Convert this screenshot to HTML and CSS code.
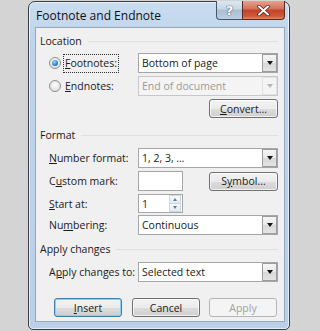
FILE: index.html
```html
<!DOCTYPE html>
<html>
<head>
<meta charset="utf-8">
<link rel="stylesheet" href="styles.css">
</head>
<body>
<div class="window">
  <div class="titlebar">
    <span class="title">Footnote and Endnote</span>
  </div>
  <div class="caption-btns">
    <div class="cbtn help">?</div>
    <div class="cbtn close"><svg width="13" height="11" viewBox="0 0 13 11"><path d="M2 1.5 L11 9.5 M11 1.5 L2 9.5" stroke="#5a1a10" stroke-width="3.4" stroke-linecap="round"/><path d="M2 1.5 L11 9.5 M11 1.5 L2 9.5" stroke="#ffffff" stroke-width="2" stroke-linecap="round"/></svg></div>
  </div>
  <div class="panel">
    <div class="group-head h-loc"><span>Location</span><i class="rule"></i></div>

    <div class="row r-foot">
      <div class="lab radio-lab"><span class="radio on"></span><span class="focus"><u>F</u>ootnotes:</span></div>
      <div class="select"><span class="val">Bottom of page</span><span class="drop"><i class="tri"></i></span></div>
    </div>
    <div class="row r-end">
      <div class="lab radio-lab"><span class="radio"></span><span class="plain"><u>E</u>ndnotes:</span></div>
      <div class="select disabled"><span class="val">End of document</span><span class="drop"><i class="tri"></i></span></div>
    </div>
    <div class="row r-conv">
      <div class="btn"><u>C</u>onvert...</div>
    </div>

    <div class="group-head h-fmt"><span>Format</span><i class="rule"></i></div>

    <div class="row r-num">
      <div class="lab"><u>N</u>umber format:</div>
      <div class="select"><span class="val">1, 2, 3, …</span><span class="drop"><i class="tri"></i></span></div>
    </div>
    <div class="row r-cust">
      <div class="lab">C<u>u</u>stom mark:</div>
      <div class="textbox"></div>
      <div class="btn">S<u>y</u>mbol...</div>
    </div>
    <div class="row r-start">
      <div class="lab"><u>S</u>tart at:</div>
      <div class="spin"><span class="val">1</span><span class="arrows"><span class="sbtn"><i class="up"></i></span><span class="sbtn"><i class="down"></i></span></span></div>
    </div>
    <div class="row r-numb">
      <div class="lab">Nu<u>m</u>bering:</div>
      <div class="select"><span class="val">Continuous</span><span class="drop"><i class="tri"></i></span></div>
    </div>

    <div class="group-head h-apply"><span>Apply changes</span><i class="rule"></i></div>

    <div class="row r-applyto">
      <div class="lab">A<u>p</u>ply changes to:</div>
      <div class="select"><span class="val">Selected text</span><span class="drop"><i class="tri"></i></span></div>
    </div>

    <div class="row r-btns">
      <div class="btn default"><u>I</u>nsert</div>
      <div class="btn">Cancel</div>
      <div class="btn disabled">Apply</div>
    </div>
  </div>
</div>
</body>
</html>
```
FILE: styles.css
```css
html, body {
  margin: 0;
  padding: 0;
}
body {
  background: #d4d4d4;
  width: 320px;
  height: 331px;
  overflow: hidden;
  font-family: "Open Sans", "Noto Sans", sans-serif;
  font-size: 10.5px;
  color: #1a1a1a;
}
u { text-decoration: underline; text-underline-offset: 1px; }

.window {
  position: relative;
  box-sizing: border-box;
  margin: 1px 0 0 28px;
  width: 262px;
  height: 329px;
  border: 1px solid #3b3f45;
  border-radius: 7px 7px 5px 5px;
  background: linear-gradient(to bottom, #c9dcf0 0px, #bfd4eb 40px, #bad0e9 100%);
  padding: 0 4px 7px 6px;
  display: flex;
  flex-direction: column;
  box-shadow: inset 0 0 0 1px rgba(255,255,255,0.6);
}
.titlebar {
  height: 25px;
  display: flex;
  align-items: center;
  flex: none;
}
.title {
  font-size: 12px;
  color: #101010;
  margin-left: 1px;
  margin-top: 1px;
}
.caption-btns {
  position: absolute;
  top: -1px;
  right: 4px;
  display: flex;
}
.cbtn {
  box-sizing: border-box;
  height: 19px;
  border: 1px solid #4a5566;
  border-top: none;
  display: flex;
  align-items: center;
  justify-content: center;
}
.help {
  width: 26px;
  border-radius: 0 0 0 4px;
  border-right: none;
  background: linear-gradient(to bottom, #dde7f2 0%, #c8d6e6 45%, #a9bdd3 50%, #bcd0e4 100%);
  color: #fff;
  font-family: "DejaVu Sans", sans-serif;
  font-size: 13px;
  font-weight: bold;
  text-shadow: 0 0 1px #35455a, 0 0 1px #35455a;
}
.close {
  width: 43px;
  border-radius: 0 0 4px 0;
  background: linear-gradient(to bottom, #e8a08e 0%, #d3705a 45%, #c3412a 50%, #cf5a3a 85%, #e08a60 100%);
  border-color: #5b2a22;
}

.panel {
  flex: 1;
  box-sizing: border-box;
  border: 1px solid #93a8bf;
  background: #f0f0f0;
  display: flex;
  flex-direction: column;
  padding: 0 6px 0 4px;
}

.group-head {
  height: 14px;
  display: flex;
  align-items: center;
  color: #1a1a1a;
}
.group-head .rule {
  flex: 1;
  height: 1px;
  background: #dcdfe3;
  margin-left: 6px;
}
.h-loc { margin-top: 6px; }
.h-fmt { margin-top: 10px; }
.h-apply { margin-top: 7px; }

.row {
  display: flex;
  align-items: center;
  flex: none;
}
.lab {
  width: 90px;
  padding-left: 9px;
  box-sizing: border-box;
  flex: none;
  white-space: nowrap;
}
.radio-lab {
  display: flex;
  align-items: center;
  padding-left: 9px;
}
.radio {
  width: 12px;
  height: 12px;
  box-sizing: border-box;
  border-radius: 50%;
  border: 1px solid #8f8f8f;
  background: radial-gradient(circle at 50% 40%, #ffffff 0%, #e6e6e6 60%, #d0d0d0 100%);
  margin-right: 3px;
  flex: none;
  position: relative;
}
.radio.on::after {
  content: "";
  position: absolute;
  left: 2px;
  top: 2px;
  width: 6px;
  height: 6px;
  border-radius: 50%;
  background: radial-gradient(circle at 40% 35%, #9fd6ff 0%, #2a7fd0 60%, #1a4f90 100%);
}
.focus {
  outline: 1px dotted #333;
  outline-offset: 0;
  padding: 2px 1px 3px 1px;
  line-height: 12px;
}
.plain { padding-left: 1px; }

.r-foot { margin-top: 5px; height: 20px; }
.r-end { margin-top: 3px; height: 20px; }
.r-conv { margin-top: 3px; height: 19px; justify-content: flex-end; }
.r-num { margin-top: 6px; height: 20px; }
.r-cust { margin-top: 3px; height: 20px; }
.r-start { margin-top: 3px; height: 19px; }
.r-numb { margin-top: 2px; height: 20px; }
.r-applyto { margin-top: 6px; height: 20px; }
.r-btns { margin-top: 16px; height: 19px; padding-left: 14px; gap: 10px; }
.r-btns .btn { width: 68px; }
.r-btns .btn.disabled { margin-left: -1px; }

.select {
  box-sizing: border-box;
  width: 140px;
  height: 20px;
  border: 1px solid #a4a6aa;
  background: #fff;
  margin-left: 8px;
  display: flex;
  align-items: center;
  position: relative;
}
.select .val {
  flex: 1;
  padding-left: 3px;
  white-space: nowrap;
}
.select .drop {
  box-sizing: border-box;
  width: 15px;
  height: 18px;
  border: 1px solid #9c9c9c;
  background: linear-gradient(to bottom, #f6f6f6 0%, #e8e8e8 50%, #d8d8d8 51%, #e4e4e4 100%);
  display: flex;
  align-items: center;
  justify-content: center;
}
.tri {
  width: 0;
  height: 0;
  border-left: 3.5px solid transparent;
  border-right: 3.5px solid transparent;
  border-top: 4px solid #111;
}
.select.disabled {
  background: #f4f4f4;
  border-color: #c8c8c8;
  color: #9a9a9a;
}
.select.disabled .drop {
  background: #f4f4f4;
  border-color: #e0e0e0;
}
.select.disabled .tri { border-top-color: #b5b5b5; }

.textbox {
  box-sizing: border-box;
  width: 45px;
  height: 20px;
  border: 1px solid #a4a6aa;
  background: #fff;
  margin-left: 8px;
}
.r-cust .btn { margin-left: auto; }

.spin {
  box-sizing: border-box;
  width: 45px;
  height: 19px;
  border: 1px solid #a4a6aa;
  background: #fff;
  margin-left: 8px;
  display: flex;
  align-items: center;
}
.spin .val { flex: 1; padding-left: 3px; }
.spin .arrows {
  width: 12px;
  height: 17px;
  display: flex;
  flex-direction: column;
  margin-right: 1px;
}
.sbtn {
  flex: 1;
  box-sizing: border-box;
  border: 1px solid #cfd6de;
  background: linear-gradient(to bottom, #f8f9fa, #e6eaee);
  display: flex;
  align-items: center;
  justify-content: center;
}
.sbtn + .sbtn { border-top: none; }
.up, .down {
  width: 0; height: 0;
  border-left: 2.5px solid transparent;
  border-right: 2.5px solid transparent;
}
.up { border-bottom: 3px solid #5a7ea8; }
.down { border-top: 3px solid #5a7ea8; }

.btn {
  box-sizing: border-box;
  width: 69px;
  height: 19px;
  border: 1px solid #707070;
  border-radius: 3px;
  background: linear-gradient(to bottom, #f3f3f3 0%, #ebebeb 50%, #dddddd 51%, #cfcfcf 100%);
  display: flex;
  align-items: center;
  justify-content: center;
  color: #1a1a1a;
  box-shadow: inset 0 0 0 1px rgba(255,255,255,0.7);
}
.btn.default {
  border-color: #3c7fb1;
  box-shadow: inset 0 0 0 1px #8ed0f5;
}
.btn.disabled {
  border-color: #b5b5b5;
  background: #f4f4f4;
  color: #a0a0a0;
  box-shadow: none;
}
```
